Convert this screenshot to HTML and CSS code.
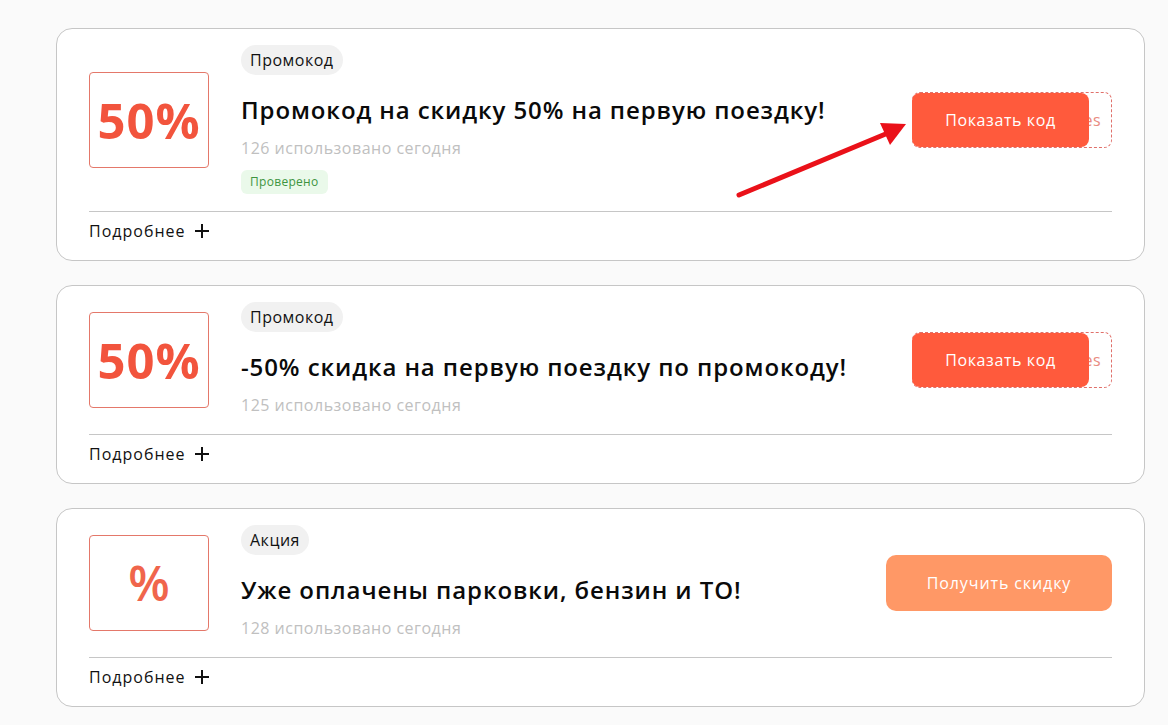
FILE: index.html
```html
<!DOCTYPE html>
<html lang="ru">
<head>
<meta charset="utf-8">
<title>Промокоды</title>
<link rel="stylesheet" href="styles.css">
</head>
<body>
<div class="list">
  <div class="card">
    <div class="main">
      <div class="discount"><span class="value">50%</span></div>
      <div class="info">
        <span class="tag">Промокод</span>
        <div class="title">Промокод на скидку 50% на первую поездку!</div>
        <div class="used">126 использовано сегодня</div>
        <span class="verified">Проверено</span>
      </div>
      <div class="action">
        <div class="code-box"><span class="code">es</span><button class="btn btn-code">Показать код</button></div>
      </div>
    </div>
    <div class="divider"></div>
    <div class="more">Подробнее <svg class="plus" viewBox="0 0 14 14" width="14" height="14"><path d="M7 0v14M0 7h14" stroke="#111" stroke-width="2"/></svg></div>
  </div>

  <div class="card">
    <div class="main">
      <div class="discount"><span class="value">50%</span></div>
      <div class="info">
        <span class="tag">Промокод</span>
        <div class="title">-50% скидка на первую поездку по промокоду!</div>
        <div class="used">125 использовано сегодня</div>
      </div>
      <div class="action">
        <div class="code-box"><span class="code">es</span><button class="btn btn-code">Показать код</button></div>
      </div>
    </div>
    <div class="divider"></div>
    <div class="more">Подробнее <svg class="plus" viewBox="0 0 14 14" width="14" height="14"><path d="M7 0v14M0 7h14" stroke="#111" stroke-width="2"/></svg></div>
  </div>

  <div class="card">
    <div class="main">
      <div class="discount"><span class="value percent">%</span></div>
      <div class="info">
        <span class="tag">Акция</span>
        <div class="title">Уже оплачены парковки, бензин и ТО!</div>
        <div class="used">128 использовано сегодня</div>
      </div>
      <div class="action">
        <button class="btn btn-deal">Получить скидку</button>
      </div>
    </div>
    <div class="divider"></div>
    <div class="more">Подробнее <svg class="plus" viewBox="0 0 14 14" width="14" height="14"><path d="M7 0v14M0 7h14" stroke="#111" stroke-width="2"/></svg></div>
  </div>
</div>
<svg class="arrow" width="1168" height="725" viewBox="0 0 1168 725">
  <line x1="739" y1="195" x2="888" y2="133" stroke="#ea1119" stroke-width="5" stroke-linecap="round"/>
  <polygon points="906,124 880,123 890,145" fill="#ea1119"/>
</svg>
</body>
</html>
```
FILE: styles.css
```css
* { box-sizing: border-box; }
html, body { margin: 0; padding: 0; }
body {
  background: #fafafa;
  font-family: "Open Sans", "Noto Sans", sans-serif;
  color: #111;
  letter-spacing: 0.5px;
  width: 1168px;
  height: 725px;
  overflow: hidden;
  position: relative;
}
.list {
  margin: 28px 0 0 56px;
  width: 1089px;
  display: flex;
  flex-direction: column;
  gap: 24px;
}
.card {
  background: #fff;
  border: 1px solid #c6c6c6;
  border-radius: 16px;
  padding: 16px 32px 0;
}
.main {
  display: flex;
  align-items: center;
}
.discount {
  width: 120px;
  height: 96px;
  flex: none;
  border: 1px solid #e4786a;
  border-radius: 4px;
  display: flex;
  align-items: center;
  justify-content: center;
}
.value {
  font-size: 49px;
  font-weight: 700;
  color: #f2543d;
  letter-spacing: 1px;
}
.value.percent {
  font-size: 48px;
  font-weight: 600;
  color: #f0654c;
  letter-spacing: 0;
}
.info {
  flex: 1;
  margin-left: 32px;
  display: flex;
  flex-direction: column;
  align-items: flex-start;
}
.tag {
  height: 30px;
  line-height: 30px;
  padding: 0 9px;
  background: #f1f1f1;
  border-radius: 15px;
  font-size: 16px;
  color: #111;
}
.title {
  margin-top: 19px;
  font-size: 24px;
  line-height: 32px;
  font-weight: 600;
  letter-spacing: 0.9px;
  color: #0a0a0a;
}
.used {
  margin-top: 12px;
  font-size: 16px;
  line-height: 20px;
  color: #c0c0c0;
}
.used:last-child { margin-bottom: 2px; }
.verified {
  margin-top: 12px;
  height: 24px;
  line-height: 24px;
  padding: 0 9px;
  background: #eaf9ea;
  border-radius: 6px;
  font-size: 12px;
  letter-spacing: 0.3px;
  color: #3d9440;
}
.action {
  flex: none;
  display: flex;
  justify-content: flex-end;
}
.code-box {
  position: relative;
  width: 200px;
  height: 56px;
  border: 1px dashed #e0706a;
  border-radius: 8px;
  display: flex;
  align-items: center;
  justify-content: flex-end;
  padding-right: 10px;
}
.code {
  font-size: 16px;
  color: #e98a80;
}
.btn {
  border: none;
  font-family: inherit;
  font-size: 16px;
  font-weight: 500;
  color: #fff;
  cursor: pointer;
}
.btn-code {
  position: absolute;
  left: -1px;
  top: 0;
  width: 177px;
  height: 54px;
  background: #ff5a3c;
  border-radius: 8px;
  letter-spacing: 0.6px;
}
.btn-deal {
  width: 226px;
  height: 56px;
  background: #ff9866;
  border-radius: 10px;
  letter-spacing: 0.9px;
}
.divider {
  margin-top: 17px;
  height: 1px;
  background: #c6c6c6;
}
.more {
  display: flex;
  align-items: center;
  gap: 9px;
  padding: 9px 0 19px;
  font-size: 16px;
  line-height: 20px;
  letter-spacing: 1px;
  color: #111;
}
.plus { display: block; }
.arrow {
  position: absolute;
  left: 0;
  top: 0;
  pointer-events: none;
}
```
